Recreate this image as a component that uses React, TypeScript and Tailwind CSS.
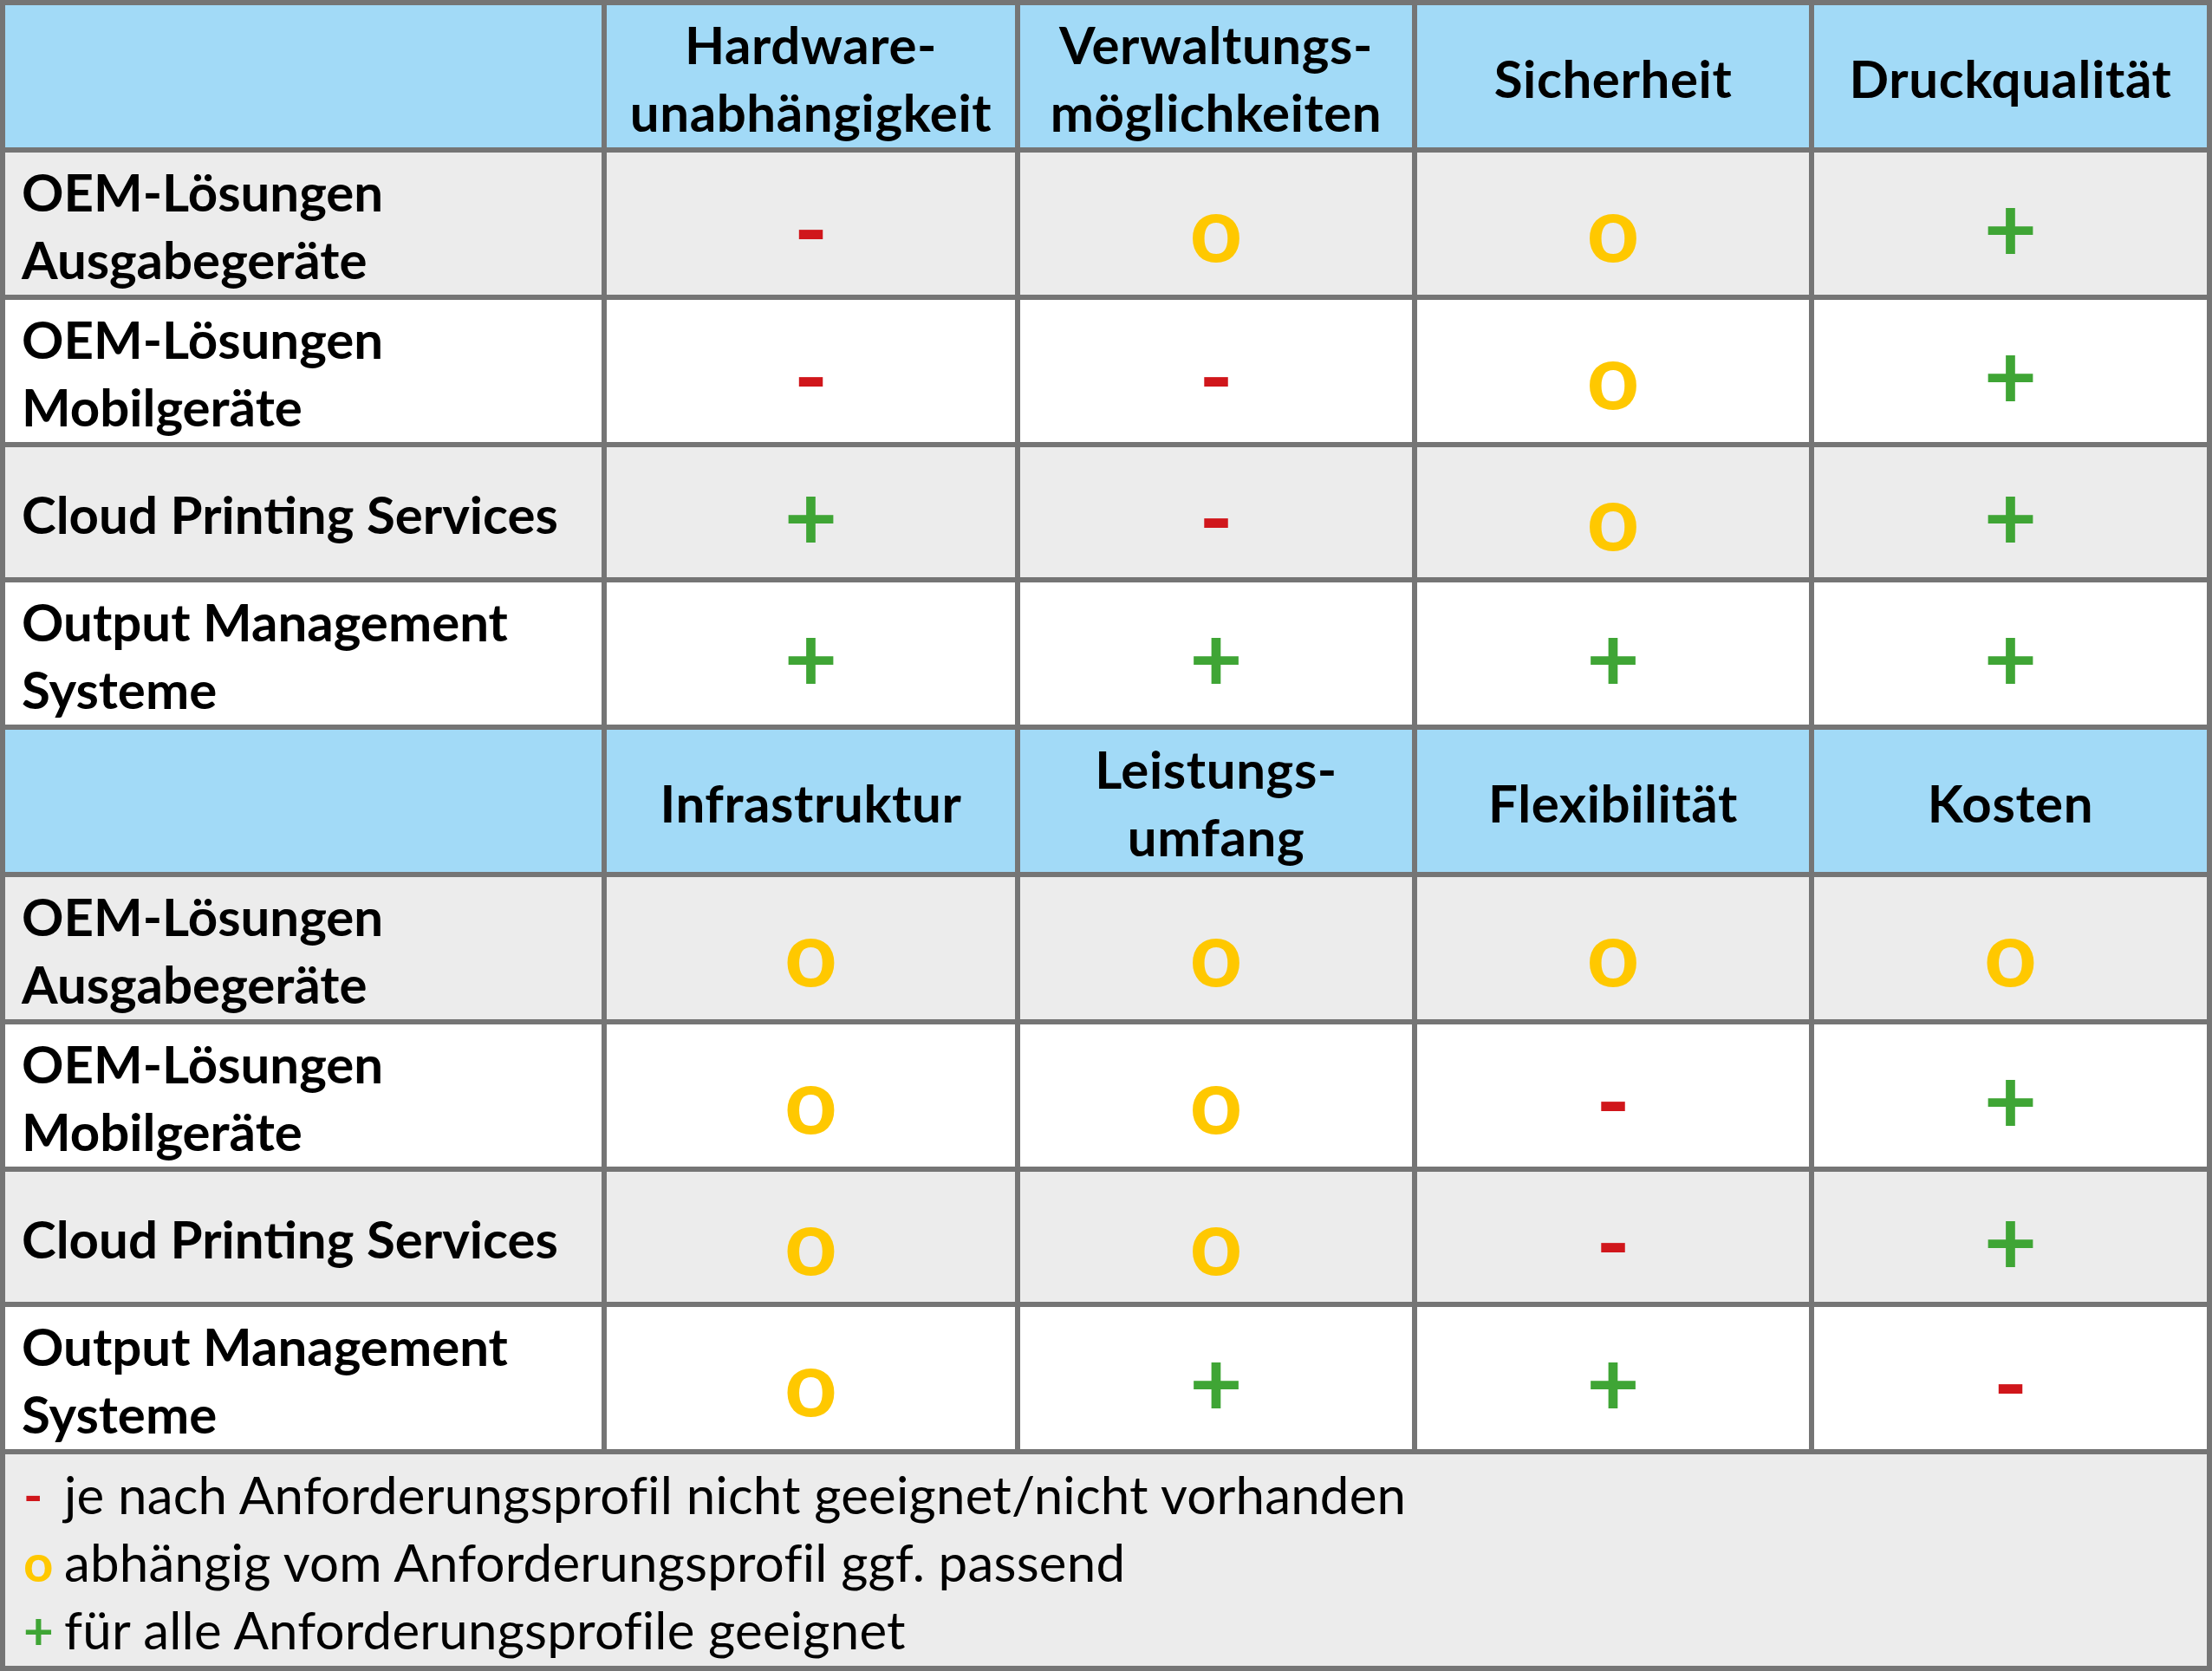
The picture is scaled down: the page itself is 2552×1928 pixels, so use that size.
import React from 'react';

type Mark = '-' | 'o' | '+';

const markColor: Record<Mark, string> = {
    '-': 'text-[#d0161b]',
    'o': 'text-[#ffc800]',
    '+': 'text-[#3fa535]',
};

const labels = [
    ['OEM-Lösungen', 'Ausgabegeräte'],
    ['OEM-Lösungen', 'Mobilgeräte'],
    ['Cloud Printing Services'],
    ['Output Management', 'Systeme'],
];

const blocks: { headers: string[][]; rows: Mark[][] }[] = [
    {
        headers: [['Hardware-', 'unabhängigkeit'], ['Verwaltungs-', 'möglichkeiten'], ['Sicherheit'], ['Druckqualität']],
        rows: [
            ['-', 'o', 'o', '+'],
            ['-', '-', 'o', '+'],
            ['+', '-', 'o', '+'],
            ['+', '+', '+', '+'],
        ],
    },
    {
        headers: [['Infrastruktur'], ['Leistungs-', 'umfang'], ['Flexibilität'], ['Kosten']],
        rows: [
            ['o', 'o', 'o', 'o'],
            ['o', 'o', '-', '+'],
            ['o', 'o', '-', '+'],
            ['o', '+', '+', '-'],
        ],
    },
];

const legend: { mark: Mark; text: string }[] = [
    { mark: '-', text: 'je nach Anforderungsprofil nicht geeignet/nicht vorhanden' },
    { mark: 'o', text: 'abhängig vom Anforderungsprofil ggf. passend' },
    { mark: '+', text: 'für alle Anforderungsprofile geeignet' },
];

const Lines = ({ lines }: { lines: string[] }) => (
    <>
        {lines.map((l, i) => (
            <React.Fragment key={i}>
                {i > 0 && <br />}
                {l}
            </React.Fragment>
        ))}
    </>
);

export default function App() {
    return (
        <div className="w-[2552px] h-[1928px] grid grid-cols-[688px_471px_452px_452px_453px] grid-rows-[164px_164px_164px_150px_164px_164px_164px_164px_150px_164px_244px] gap-[6px] p-[6px] bg-[#757575] font-['Lato','Noto_Sans',sans-serif] text-black">
            {blocks.map((block, b) => (
                <React.Fragment key={b}>
                    <div className="bg-[#a2daf7]" />
                    {block.headers.map((h, i) => (
                        <div
                            key={i}
                            className="bg-[#a2daf7] flex items-center justify-center pt-[4px] text-center font-bold text-[60px] tracking-[0.6px] leading-[78px] whitespace-nowrap"
                        >
                            <div>
                                <Lines lines={h} />
                            </div>
                        </div>
                    ))}
                    {block.rows.map((row, r) => {
                        const bg = r % 2 === 0 ? 'bg-[#ececec]' : 'bg-white';
                        return (
                            <React.Fragment key={r}>
                                <div className={`${bg} flex items-center pl-[19px] pt-[4px] font-bold text-[60px] leading-[78px] whitespace-nowrap`}>
                                    <div>
                                        <Lines lines={labels[r]} />
                                    </div>
                                </div>
                                {row.map((m, c) => (
                                    <div
                                        key={c}
                                        className={`${bg} flex items-center justify-center pt-[6px] font-bold text-[106px] leading-none ${markColor[m]}`}
                                    >
                                        {m}
                                    </div>
                                ))}
                            </React.Fragment>
                        );
                    })}
                </React.Fragment>
            ))}
            <div className="col-span-5 bg-[#ececec] flex flex-col justify-center pl-[21px] pt-[4px] text-[60px] tracking-[0.2px] leading-[78px]">
                {legend.map((l, i) => (
                    <div key={i} className="flex whitespace-nowrap">
                        <span className={`w-[47px] font-bold ${markColor[l.mark]}`}>{l.mark}</span>
                        <span>{l.text}</span>
                    </div>
                ))}
            </div>
        </div>
    );
}
